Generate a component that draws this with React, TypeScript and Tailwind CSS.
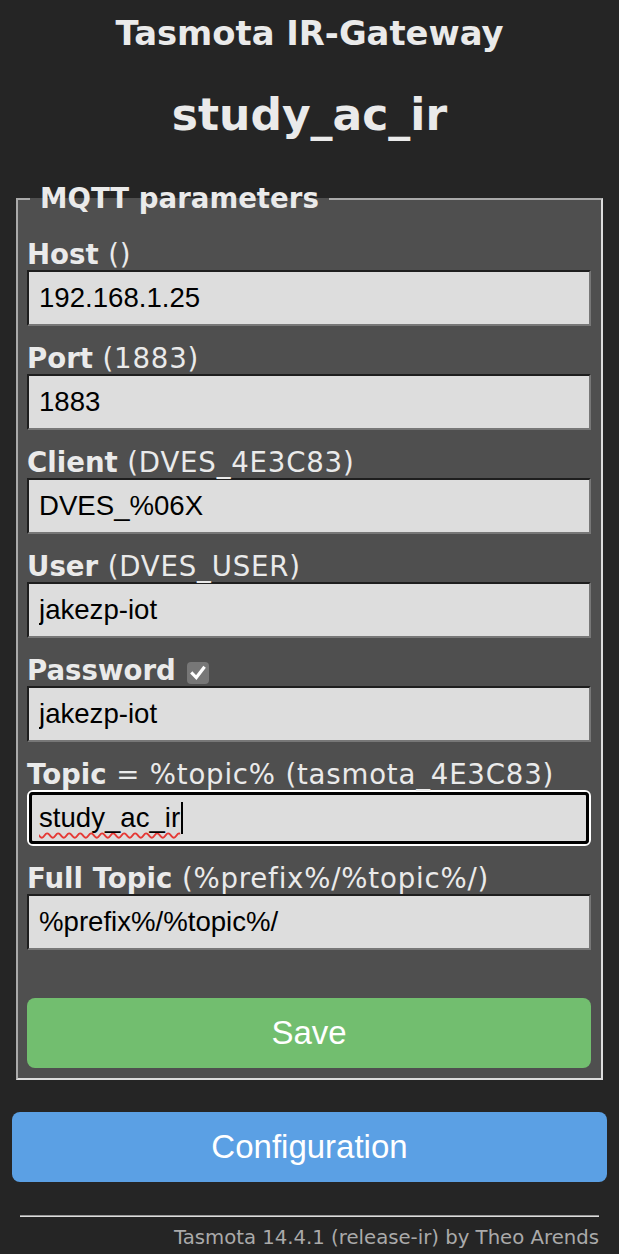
import React from 'react';

const verdana = "font-['DejaVu_Sans',Verdana,sans-serif]";
const arial = "font-['Liberation_Sans',Arial,sans-serif]";

interface Field {
  name: string;
  hint: React.ReactNode;
  value: string;
  focused?: boolean;
}

const CheckBox = () => (
  <span className="inline-flex items-center justify-center w-[22px] h-[22px] rounded-[4px] bg-[#777] align-[-2px] ml-[2px]">
    <svg viewBox="0 0 16 16" className="w-[18px] h-[18px]">
      <path d="M3 8.5 L6.5 12 L13 3.5" fill="none" stroke="#fff" strokeWidth="2.8" strokeLinecap="square" />
    </svg>
  </span>
);

const fields: Field[] = [
  { name: 'Host', hint: ' ()', value: '192.168.1.25' },
  { name: 'Port', hint: ' (1883)', value: '1883' },
  { name: 'Client', hint: ' (DVES_4E3C83)', value: 'DVES_%06X' },
  { name: 'User', hint: ' (DVES_USER)', value: 'jakezp-iot' },
  { name: 'Password', hint: <> <CheckBox /></>, value: 'jakezp-iot' },
  { name: 'Topic', hint: ' = %topic% (tasmota_4E3C83)', value: 'study_ac_ir', focused: true },
  { name: 'Full Topic', hint: ' (%prefix%/%topic%/)', value: '%prefix%/%topic%/' },
];

const FieldRow = ({ f }: { f: Field }) => (
  <div>
    <div className={`mt-[18px] h-[30px] leading-[30px] text-[27.6px] text-[#eaeaea] whitespace-nowrap ${verdana}`}>
      <b>{f.name}</b>
      <span className="tracking-[0.8px]">{f.hint}</span>
    </div>
    {f.focused ? (
      <div className="h-[56px] rounded-[6px] border-2 border-white">
        <div
          className={`flex items-center w-full h-full box-border px-[7px] bg-[#dddddd] text-black text-[27.6px] rounded-[4px] border-[3px] border-black ${arial}`}
        >
          <span className="underline decoration-wavy decoration-[#e53935] decoration-[1.5px] underline-offset-[5px]">
            {f.value}
          </span>
          <span className="w-[1.5px] h-[32px] bg-black ml-[1px]" />
        </div>
      </div>
    ) : (
      <input
        readOnly
        value={f.value}
        className={`block w-full h-[56px] box-border px-[10px] bg-[#dddddd] text-black text-[27.6px] border-2 border-t-[#1e1e1e] border-l-[#1e1e1e] border-b-[#777] border-r-[#777] outline-none ${arial}`}
      />
    )}
  </div>
);

export default function App() {
  return (
    <div className={`min-h-[1254px] bg-[#252525] text-[#eaeaea] px-[12px] pt-[12px] ${verdana}`}>
      <h3 className="text-center font-bold text-[33.8px] leading-[44px]">Tasmota IR-Gateway</h3>
      <h2 className="text-center font-bold text-[44px] leading-[56px] mt-[31px]">study_ac_ir</h2>

      <fieldset className="mt-[38px] mx-[4px] pl-[9px] pr-[10px] pb-[10px] bg-[#4f4f4f] border-2 border-t-[#aaa] border-l-[#aaa] border-b-[#ddd] border-r-[#ddd]">
        <legend className="ml-[3px] px-[10px] font-bold text-[27.6px] leading-[36px] text-[#eaeaea]">MQTT parameters</legend>
        <div className="pt-[5px]">
          {fields.map((f) => (
            <FieldRow key={f.name} f={f} />
          ))}
        </div>
        <button className={`mt-[48px] w-full h-[70px] rounded-[8px] bg-[#72be6f] text-white text-[33px] ${arial}`}>
          Save
        </button>
      </fieldset>

      <button className={`mt-[32px] w-full h-[70px] rounded-[8px] bg-[#5ba0e4] text-white text-[33px] ${arial}`}>
        Configuration
      </button>

      <div className="mx-[8px] mt-[33px] h-[2px] bg-[#ddd] border-t border-[#999]" />
      <div className="mx-[8px] mt-[9px] text-right text-[19.7px] leading-[24px] text-[#aaa]">
        Tasmota 14.4.1 (release-ir) by Theo Arends
      </div>
    </div>
  );
}
